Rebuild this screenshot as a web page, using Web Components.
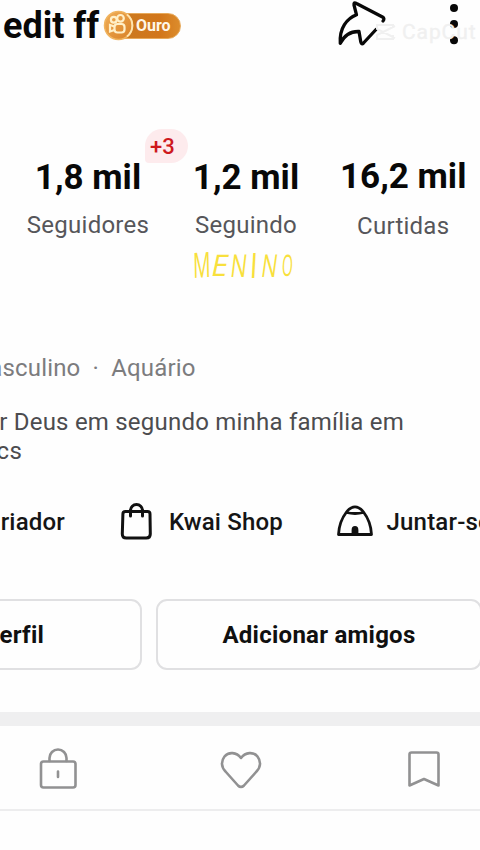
<!DOCTYPE html>
<html lang="pt">
<head>
<meta charset="utf-8">
<title>Perfil</title>
<style>
html,body{margin:0;background:#fefefe;overflow:hidden}
body{width:480px;height:850px;font-family:Roboto,"Liberation Sans",sans-serif;color:#101010}
</style>
</head>
<body>
<profile-page></profile-page>
<script>
const define = (name, html) => customElements.define(name, class extends HTMLElement {
  constructor() {
    super();
    this.attachShadow({mode: 'open'}).innerHTML = html;
  }
});

define('level-badge', `
<style>
:host{display:flex;align-items:center;width:77px;height:31px;position:relative}
.pill{box-sizing:border-box;margin-left:8px;width:69px;height:26px;border-radius:13px;padding-left:23px;background:linear-gradient(90deg,#c97a20,#d2761a 70%,#dc8c2c);border:1px solid #e7a95a;color:#fff6e8;font-weight:700;font-size:16px;line-height:24px;letter-spacing:0}
svg{position:absolute;left:-1px;top:0}
</style>
<div class="pill"><slot></slot></div>
<svg width="32" height="31" viewBox="0 0 32 31">
<defs><linearGradient id="g" x2="1" y2="1"><stop stop-color="#f0ae58"/><stop offset="1" stop-color="#d88024"/></linearGradient></defs>
<circle cx="15.500" cy="15.500" r="14" fill="url(#g)" stroke="#f0b45f" stroke-width="1.500"/>
<path d="M24 4.500A14 14 0 0 1 24 26.500" fill="none" stroke="#ffe4ae" stroke-width="2"/>
<g fill="none" stroke="#fff0c8" stroke-width="2.200"><circle cx="10.800" cy="9.800" r="2.900"/><circle cx="17.500" cy="8.300" r="3.300"/><rect x="11.500" y="14" width="10" height="8.500" rx="3"/><path d="M11.500 16.500L7 15v6.500l4.500-1.500"/></g>
</svg>`);

define('profile-header', `
<style>
:host{display:flex;height:56px;position:relative}
h1{margin:0;padding-left:3px;width:104px;box-sizing:border-box;font-size:36px;line-height:52px;font-weight:700;color:#080808;white-space:nowrap}
level-badge{margin-top:10px}
.share{margin-left:155px;flex:none}
.more{margin-left:57px;flex:none}
.mark{position:absolute;left:375px;top:21px;display:flex;align-items:center;gap:5px;color:#f1f1f1;font-size:21px;line-height:22px;letter-spacing:.900px;-webkit-text-stroke:.3px #efefef}
</style>
<h1>edit ff</h1><level-badge>Ouro</level-badge>
<svg class="share" width="52" height="48" viewBox="336 0 52 48" fill="none" stroke="#080808" stroke-width="3.300" stroke-linejoin="round" stroke-linecap="round"><path d="M376 29.500L363.500 43Q361.500 45 360.800 42L359 31.500Q346.500 31 340.300 43.300C339.200 28 347 18.500 356.500 14.800L354 5Q353.500 1.800 356.500 3.500L382.500 17Q385 18.500 383 21"/></svg>
<svg class="more" width="16" height="48" viewBox="0 0 16 48" fill="#080808"><circle cx="9" cy="8" r="4"/><circle cx="9" cy="24" r="4"/><circle cx="9" cy="40.300" r="4"/></svg>
<div class="mark"><svg width="22" height="20" viewBox="0 0 22 20" fill="none" stroke="#f0f0f0" stroke-width="2"><path d="M18 6V3H2v4l18 9M18 13v4H2v-4L20 4"/></svg><span>CapCut</span></div>`);

define('stat-item', `
<style>
:host{display:block;flex:none;width:158px;text-align:center;position:relative;white-space:nowrap}
.n{font-size:35px;line-height:42px;font-weight:700;color:#080808;letter-spacing:var(--ls,0)}
.l{font-size:24px;line-height:30px;margin-top:var(--gap,11px);color:#56565a;letter-spacing:.25px}
.b{position:absolute;left:136px;top:-28px}
</style>
<div class="n"><slot name="value"></slot></div><div class="l"><slot></slot></div><div class="b"><slot name="badge"></slot></div>`);

define('new-count', `
<style>:host{display:block;box-sizing:border-box;width:43px;height:34px;border-radius:17px 17px 17px 4px;background:#fdebed;color:#ce191d;font-size:22px;font-weight:500;line-height:35px;text-align:left;padding-left:5px}</style><slot></slot>`);

define('hand-note', `
<style>
:host{display:flex;width:104px;height:34px;color:#f8e03c;font:400 35px/34px "Open Sans",sans-serif}
span{display:block;width:var(--w);height:34px;flex:none}
i{display:block;width:max-content;font-style:normal;font-weight:400;transform-origin:0 50%;transform:var(--t)}
</style>
<span style="--w:19px;--t:scaleX(.56) rotate(-2deg)"><i>M</i></span><span style="--w:19px;--t:scaleX(.85) scaleY(.85) skewX(-12deg)"><i>E</i></span><span style="--w:18.500px;--t:scaleX(.62) scaleY(.9) skewX(-10deg)"><i>N</i></span><span style="--w:12px;--t:scaleX(.8) skewX(-4deg)"><i>I</i></span><span style="--w:20px;--t:scaleX(.6) scaleY(.9) skewX(-12deg)"><i>N</i></span><span style="--w:14px;--t:scaleX(.4) scaleY(.85) skewX(-6deg)"><i>O</i></span>`);

define('quick-link', `
<style>:host{display:flex;align-items:center;flex:none;height:40px;font-size:24px;font-weight:500;color:#151515;white-space:nowrap;letter-spacing:.2px}::slotted(svg){flex:none;margin-right:var(--gap,16px)}</style><slot name="icon"></slot><slot></slot>`);

define('outline-button', `
<style>:host{display:block;box-sizing:border-box;flex:none;height:71px;border:2px solid #e0e0e2;border-radius:11px;font-size:24px;font-weight:700;line-height:68px;text-align:center;color:#101010;white-space:nowrap;letter-spacing:.25px}</style><slot></slot>`);

define('tab-bar', `
<style>:host{display:grid;grid-template-columns:repeat(3,183px);margin-left:-34px;width:549px;height:83px;border-top:14px solid #efeff0;border-bottom:2px solid #ededee;justify-items:center;align-items:center}
svg{fill:none;stroke:#919192;stroke-width:2.600;stroke-linejoin:round;stroke-linecap:round;margin-top:3px}</style>
<svg width="42" height="44" viewBox="37 747 42 44"><rect x="41" y="761.500" width="34.500" height="26" rx="2.500"/><path d="M49.500 761V758a8.500 8.500 0 0 1 17 0v3M58 771.500v5.500"/></svg>
<svg width="44" height="44" viewBox="219.500 747 44 44"><path d="M241.500 758C237 752 229 751.500 225 756.500C221.500 761 221.500 767 226 771.500L238.500 785.500Q241.500 788.500 244.500 785.500L257 771.500C261.500 767 261.500 761 258 756.500C254 751.500 246 752 241.500 758Z"/></svg>
<svg width="42" height="44" viewBox="403 747 42 44"><path d="M411.500 752.500h25q2 0 2 2v31l-14.500-6.500-14.500 6.500v-31q0-2 2-2Z"/></svg>`);

define('profile-page', `
<style>
:host{display:flex;flex-direction:column;width:480px;height:850px;overflow:hidden;background:#fefefe}
.stats{display:flex;margin:101px 0 0 9px;height:82px;flex:none}
.stats stat-item:last-child{margin:-.6px 0 0 -.8px;--gap:13px}
hand-note{margin:9px 0 0 193px;flex:none}
.meta,.bio{white-space:nowrap;display:flex;flex-direction:column;align-items:flex-start}
.meta{margin-top:71px;font-size:24px;line-height:30px;color:#7c7c7e;width:195.500px;align-items:flex-end;letter-spacing:.15px}
.bio{margin-top:25px;color:#4c4c4f;font-size:24px;line-height:29px}
.bio div{display:flex;justify-content:flex-end;letter-spacing:.22px}
.links{display:flex;margin-top:36px;height:40px;flex:none}
.first{width:65px;justify-content:flex-end}
.links svg{margin-top:-3px}
.buttons{display:flex;gap:14px;margin:57px 0 0 -100px;flex:none}
tab-bar{margin-top:42px;flex:none}
pre{margin:0;font:inherit}
</style>
<profile-header></profile-header>
<div class="stats">
<stat-item><span slot="value">1,8 mil</span>Seguidores<new-count slot="badge">+3</new-count></stat-item>
<stat-item><span slot="value">1,2 mil</span>Seguindo</stat-item>
<stat-item><span slot="value">16,2 mil</span>Curtidas</stat-item>
</div>
<hand-note></hand-note>
<div class="meta"><pre>asculino  ·  Aquário</pre></div>
<div class="bio"><div style="width:404px">r Deus em segundo minha família em</div><div style="width:22px">cs</div></div>
<div class="links">
<quick-link class="first">riador</quick-link>
<quick-link style="margin-left:54px"><svg slot="icon" width="34" height="38" viewBox="119 501 34 38" fill="none" stroke="#111" stroke-width="3" stroke-linecap="round"><path d="M125.500 510.500h22q2.500 0 2.500 2.500l.3 20q0 4-4 4h-20q-4 0-4-4l.6-20q0-2.500 2.600-2.500ZM130.500 515v-5.500a6 6 0 0 1 12 0v5.500"/></svg>Kwai Shop</quick-link>
<quick-link style="margin-left:52.500px;--gap:13px"><svg slot="icon" width="38" height="34" viewBox="335 504 38 34" fill="none" stroke="#111" stroke-width="2.800" stroke-linejoin="round"><path d="M337.500 534.500h33C370 524.500 367.500 518.500 362.500 512Q358.500 506.800 354 506.800T345.500 512C340.500 518.500 338 524.500 337.500 534.500ZM345.500 512.500q8.500 2 17 0"/><path d="M352 534v-4q0-2.500 2-2.500t2 2.500v4Z" fill="#111"/></svg>Juntar-se</quick-link>
</div>
<div class="buttons"><outline-button style="width:242px;padding-right:12px">perfil</outline-button><outline-button style="width:326px">Adicionar amigos</outline-button></div>
<tab-bar></tab-bar>`);
</script>
</body>
</html>
